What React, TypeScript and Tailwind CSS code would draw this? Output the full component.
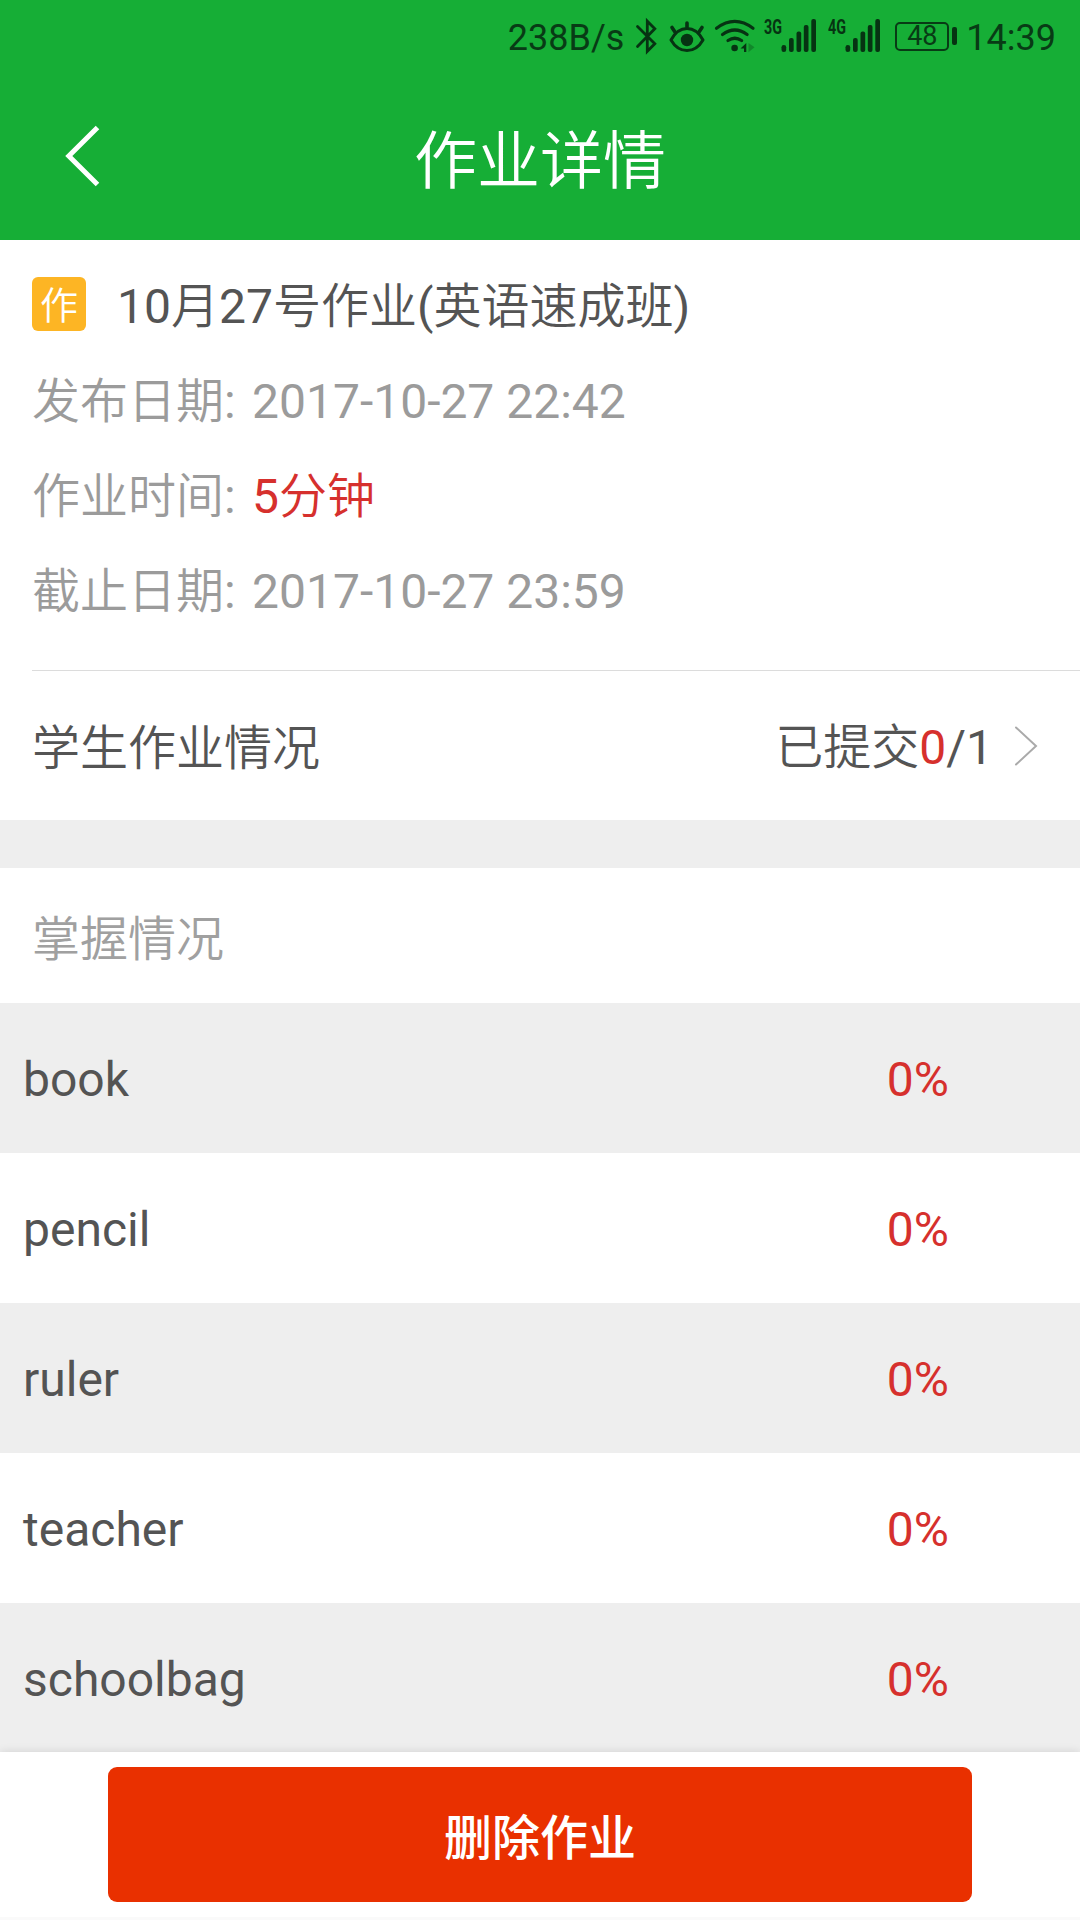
const words = [
  { name: 'book', rate: '0%' },
  { name: 'pencil', rate: '0%' },
  { name: 'ruler', rate: '0%' },
  { name: 'teacher', rate: '0%' },
  { name: 'schoolbag', rate: '0%' },
];

const infoRows = [
  { label: '发布日期', value: '2017-10-27 22:42', unit: '', color: 'text-[#9b9b9b]' },
  { label: '作业时间', value: '5', unit: '分钟', color: 'text-[#d6302d]' },
  { label: '截止日期', value: '2017-10-27 23:59', unit: '', color: 'text-[#9b9b9b]' },
];

function BluetoothIcon() {
  return (
    <svg width="24" height="72" viewBox="0 0 24 72" fill="none" stroke="currentColor" strokeWidth="2.8" strokeLinecap="round">
      <path d="M3.5 26.5 20.8 43.8 13.3 51.3V21.2l7.5 7.5L3.5 46.5" />
    </svg>
  );
}

function EyeIcon() {
  return (
    <svg width="38" height="72" viewBox="0 0 38 72" fill="none" stroke="currentColor" strokeWidth="3" strokeLinecap="round">
      <path d="M3 40c4-7.500 10-11.500 16-11.500S31 32.500 35 40c-4 7-10 10.500-16 10.500S7 47 3 40Z" strokeLinejoin="round" />
      <path d="M19 23v4M4 27.500l3 4.500M34 27.500 31 32" strokeWidth="3.600" />
      <circle cx="19" cy="40" r="6.200" fill="currentColor" stroke="none" />
    </svg>
  );
}

function WifiIcon() {
  return (
    <svg width="42" height="72" viewBox="0 0 42 72" fill="none" stroke="currentColor" strokeWidth="3.200" strokeLinecap="round">
      <path d="M2.500 28.200Q20.800 14.500 39 28.200M8.500 34.500q12.300-9 24.600 0M14 40.500q6.800-4.500 13.600 0" />
      <circle cx="20.600" cy="48" r="3.300" fill="currentColor" stroke="none" />
      <path d="M26.500 48.500 32.300 43v9h-2.300v-3.500h-3.500Z" fill="currentColor" stroke="none" />
      <path d="M34.500 43l6 4.200-6 5Z" fill="currentColor" fillOpacity="0.3" stroke="none" />
    </svg>
  );
}

function Signal({ label }: { label: string }) {
  return (
    <svg width="54" height="72" viewBox="0 0 54 72" fill="currentColor">
      <text x="0" y="33.500" fontSize="20" fontWeight="700" fontFamily="Roboto" textLength="18" lengthAdjust="spacingAndGlyphs">
        {label}
      </text>
      <rect x="17.500" y="45" width="4.700" height="7" rx="2.300" />
      <rect x="25" y="38" width="4.700" height="14" rx="2" />
      <rect x="32.500" y="31.500" width="4.700" height="20.500" rx="2" />
      <rect x="39.800" y="25" width="4.700" height="27" rx="2" />
      <rect x="47.300" y="19" width="4.700" height="33" rx="2" />
    </svg>
  );
}

function StatusBar() {
  return (
    <div className="flex h-[72px] items-center justify-end pr-[24px] text-[36px] leading-none text-[#083b15]">
      <span className="mt-[3px]">238B/s</span>
      <div className="ml-[10px] flex text-[#063312]">
        <BluetoothIcon />
        <div className="ml-[10px] flex"><EyeIcon /></div>
        <div className="ml-[8px] flex"><WifiIcon /></div>
        <div className="ml-[8px] flex"><Signal label="3G" /></div>
        <div className="ml-[10px] flex"><Signal label="4G" /></div>
      </div>
      <div className="ml-[13px] flex items-center gap-[3px]">
        <div className="flex h-[29px] w-[54px] items-center justify-center rounded-[5px] border-2 border-[#083b15] text-[27px]">
          48
        </div>
        <div className="h-[18px] w-[5px] rounded-[2px] bg-[#063312]" />
      </div>
      <span className="mt-[3px] ml-[9px]">14:39</span>
    </div>
  );
}

export default function App() {
  return (
    <div className="flex h-[1920px] w-[1080px] flex-col overflow-hidden bg-white font-[Roboto,'Noto_Sans_CJK_SC',sans-serif] text-[48px] text-[#545454]">
      <header className="h-[240px] shrink-0 bg-[#16ae36]">
        <StatusBar />
        <div className="grid h-[168px] grid-cols-[200px_1fr_200px] items-center">
          <svg className="ml-[64px]" width="38" height="64" viewBox="0 0 38 64" fill="none" stroke="#fff" strokeWidth="5">
            <path d="M33.500 3.500 4.800 32l28.700 28.500" />
          </svg>
          <h1 className="pt-[11px] text-center text-[63px] leading-[90px] font-[350] text-white">作业详情</h1>
        </div>
      </header>

      {/* Homework info */}
      <section className="ml-[32px] h-[431px] shrink-0 border-b border-[#dcdcdc] pt-[16px]">
        <div className="flex h-[95px] items-center">
          <span className="flex size-[54px] items-center justify-center rounded-[6px] bg-[#fdb524] pt-[5px] text-[38px] leading-none font-[350] text-white">
            作
          </span>
          <span className="ml-[31px] pt-[7px]">
            10<span className="font-[350]">月</span>27<span className="font-[350]">号作业</span>(
            <span className="font-[350]">英语速成班</span>)
          </span>
        </div>
        {infoRows.map((row) => (
          <div key={row.label} className="flex h-[95px] items-center pt-[7px]">
            <span className="w-[220px] text-[#9b9b9b]">
              <span className="font-[350]">{row.label}</span>:
            </span>
            <span className={row.color}>
              {row.value}
              <span className="font-[350]">{row.unit}</span>
            </span>
          </div>
        ))}
      </section>

      <div className="flex h-[149px] shrink-0 items-center justify-between pr-[42px] pl-[32px]">
        <span className="pt-[7px] font-[350]">学生作业情况</span>
        <div className="flex items-center">
          <span className="pt-[4px]">
            <span className="font-[350]">已提交</span>
            <span className="text-[#d6302d]">0</span>/1
          </span>
          <svg className="ml-[21px]" width="24" height="40" viewBox="0 0 24 40" fill="none" stroke="#aaa" strokeWidth="2" strokeLinecap="round">
            <path d="M2 1.500 22 20 2 38.500" />
          </svg>
        </div>
      </div>

      <div className="h-[48px] shrink-0 bg-[#eee]" />

      {/* Mastery list */}
      <div className="flex h-[135px] shrink-0 items-center pt-[9px] pl-[32px] font-[350] text-[#a0a0a0]">掌握情况</div>
      <ul className="h-[749px] shrink-0 overflow-hidden">
        {words.map((word) => (
          <li key={word.name} className="flex h-[150px] items-center justify-between pt-[4px] pr-[131px] pl-[23px] odd:bg-[#eee]">
            <span>{word.name}</span>
            <span className="text-[#d6302d]">{word.rate}</span>
          </li>
        ))}
      </ul>

      <footer className="relative h-[168px] shrink-0 border-b-[3px] border-[#fafafa] bg-white px-[108px] pt-[15px] shadow-[0_0_9px_rgba(0,0,0,0.12)]">
        <button className="h-[135px] w-full rounded-[9px] bg-[#e93000] pt-[9px] font-medium text-white">删除作业</button>
      </footer>
    </div>
  );
}
